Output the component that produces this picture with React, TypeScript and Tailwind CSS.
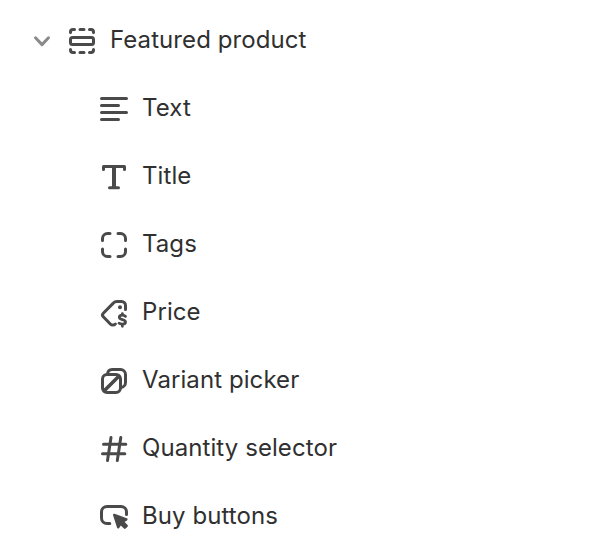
import type { ReactNode } from 'react';

function Glyph({ children }: { children: ReactNode }) {
  return (
    <svg
      className="size-10 shrink-0 text-[#4a4a4a]"
      viewBox="0 0 40 40"
      fill="none"
      stroke="currentColor"
      strokeWidth="3"
      strokeLinecap="round"
      strokeLinejoin="round"
      aria-hidden="true"
    >
      {children}
    </svg>
  );
}

const blocks: { label: string; icon: ReactNode }[] = [
  {
    label: 'Text',
    icon: <path d="M7.5 10.5H32.5M7.5 17.5H24.5M7.5 24.5H32.5M7.5 31.5H24.5" />,
  },
  {
    label: 'Title',
    icon: (
      <>
        <path d="M9.5 13.5V10.5H30.5V13.5M15.5 31.7H24.5" />
        <path d="M20 11V31" strokeWidth="4" strokeLinecap="butt" />
      </>
    ),
  },
  {
    label: 'Tags',
    icon: (
      <path d="M8.5 16.5V14.5A5 5 0 0 1 13.5 9.5H16M24 9.5H26.5A5 5 0 0 1 31.5 14.5V16.5M31.5 25V27.5A5 5 0 0 1 26.5 32.5H24M16 32.5H13.5A5 5 0 0 1 8.5 27.5V25" />
    ),
  },
  {
    label: 'Price',
    icon: (
      <>
        <path d="M31.5 17.5V13.5A4 4 0 0 0 27.5 9.5H23A5 5 0 0 0 19.3 11.1L9.3 21.3A2.5 2.5 0 0 0 9.3 24.8L16.3 32A3.6 3.6 0 0 0 21.4 32" />
        <circle cx="26" cy="15.2" r="2" fill="currentColor" stroke="none" />
        <path d="M31.5 24.3C30.8 23.4 29.8 23.2 28.3 23.2C26.4 23.2 25.3 24 25.3 25.3C25.3 28.4 31.5 26.8 31.5 30C31.5 31.4 30.3 32.1 28.4 32.1C26.8 32.1 25.7 32 25 31.2M28.4 21.7V23M28.4 32.5V34.3" strokeWidth="2.8" />
      </>
    ),
  },
  {
    label: 'Variant picker',
    icon: (
      <>
        <rect x="8.5" y="14.5" width="18" height="18" rx="4.5" />
        <path d="M13.5 14A5 5 0 0 1 18.2 9.5H26.5A5 5 0 0 1 31.5 14.5V22.5A5 5 0 0 1 27 27.5" />
        <path d="M10.5 30.5L24.8 16.2" strokeWidth="3.6" />
      </>
    ),
  },
  {
    label: 'Quantity selector',
    icon: <path d="M17 9.5L13.5 32.5M26.8 9.5L23.3 32.5M9.5 16.2H31.8M8.5 25.7H30.8" />,
  },
  {
    label: 'Buy buttons',
    icon: (
      <>
        <path d="M15.8 27.5H13A5.5 5.5 0 0 1 7.5 22V16A5.5 5.5 0 0 1 13 10.5H27A5.5 5.5 0 0 1 32.5 16V18.5" />
        <path d="M20.2 19L32.4 23.4L28.6 25.6L32.7 29.8L30.8 31.7L26.6 27.6L24.2 31.3Z" fill="currentColor" strokeWidth="2.4" />
      </>
    ),
  },
];

export default function App() {
  return (
    <main className="h-[560px] w-[596px] overflow-hidden bg-white pt-1.5 font-['Inter','Liberation_Sans',sans-serif] text-2xl tracking-[0.08px] text-[#303030]">
      <div className="flex h-[68px] items-center pl-[30px]">
        <svg className="h-10 w-6 shrink-0 text-[#8a8a8a]" viewBox="0 0 24 40" fill="none" stroke="currentColor" strokeWidth="3" strokeLinecap="round" strokeLinejoin="round" aria-hidden="true">
          <path d="M5.5 17.8L12 24.6L18.5 17.8" />
        </svg>
        <div className="ml-2">
          <Glyph>
            <rect x="8.5" y="17.5" width="23" height="7" rx="2" />
            <path d="M8.5 12.5V12A2.5 2.5 0 0 1 11 9.5H12.5M18 9.5H22M27.5 9.5H29A2.5 2.5 0 0 1 31.5 12V12.5M8.5 29.5V30A2.5 2.5 0 0 0 11 32.5H12.5M18 32.5H22M27.5 32.5H29A2.5 2.5 0 0 0 31.5 30V29.5" />
          </Glyph>
        </div>
        <span className="ml-2 whitespace-nowrap">Featured product</span>
      </div>
      <ul>
        {blocks.map((block) => (
          <li key={block.label} className="flex h-[68px] items-center gap-2 pl-[94px]">
            <Glyph>{block.icon}</Glyph>
            <span className="whitespace-nowrap">{block.label}</span>
          </li>
        ))}
      </ul>
    </main>
  );
}
